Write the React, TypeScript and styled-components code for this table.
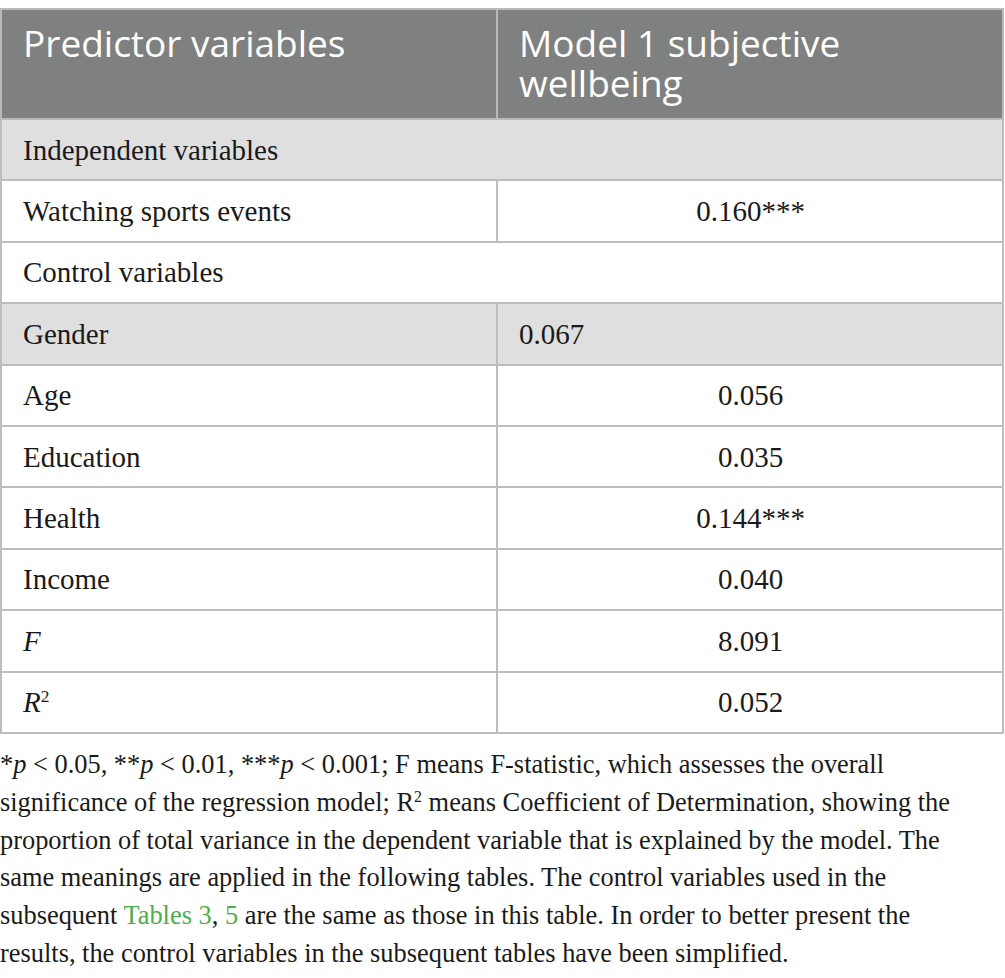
import React from "react";
import styled, { createGlobalStyle } from "styled-components";

const Global = createGlobalStyle`
  html, body { margin: 0; padding: 0; background: #ffffff; }
`;

const Page = styled.div`
  padding-top: 8px;
  width: 1004px;
`;

const Table = styled.table`
  width: 1004px;
  border-collapse: collapse;
  table-layout: fixed;
  font-family: "Liberation Serif", "Times New Roman", serif;
  color: #1a1a1a;
`;

const HeadCell = styled.th`
  background: #7f8080;
  color: #ffffff;
  font-family: "Open Sans", "Noto Sans", sans-serif;
  font-weight: 400;
  font-size: 37px;
  line-height: 40px;
  text-align: left;
  vertical-align: top;
  padding: 13px 20px 0 21px;
  height: 95px;
  border: 2px solid #b9b9b9;
`;

const Row = styled.tr<{ $shaded?: boolean }>`
  height: 61.4px;
  background: ${(p) => (p.$shaded ? "#e0dfe0" : "#ffffff")};
`;

const Cell = styled.td<{ $align?: "left" | "center" }>`
  font-size: 29px;
  line-height: 30px;
  padding: 0 20px 0 21px;
  text-align: ${(p) => p.$align ?? "left"};
  border: 2px solid #bdbdbd;
  vertical-align: middle;
`;

const Note = styled.p`
  margin: 12px 0 0 0;
  font-family: "Liberation Serif", "Times New Roman", serif;
  font-size: 26.4px;
  line-height: 37.8px;
  color: #1a1a1a;
  white-space: nowrap;
`;

const Link = styled.a`
  color: #4cae4c;
  text-decoration: none;
`;

const Sup = styled.sup`
  font-size: 0.6em;
  line-height: 0;
  vertical-align: 0.6em;
`;

const rows: { label: React.ReactNode; value?: string; shaded?: boolean; span?: boolean; left?: boolean }[] = [
  { label: "Independent variables", shaded: true, span: true },
  { label: "Watching sports events", value: "0.160***" },
  { label: "Control variables", span: true },
  { label: "Gender", value: "0.067", shaded: true, left: true },
  { label: "Age", value: "0.056" },
  { label: "Education", value: "0.035" },
  { label: "Health", value: "0.144***" },
  { label: "Income", value: "0.040" },
  { label: <i>F</i>, value: "8.091" },
  { label: <><i>R</i><Sup>2</Sup></>, value: "0.052" },
];

export default function App() {
  return (
    <Page>
      <Global />
      <Table>
        <colgroup>
          <col style={{ width: "496px" }} />
          <col />
        </colgroup>
        <thead>
          <tr>
            <HeadCell>Predictor variables</HeadCell>
            <HeadCell>Model 1 subjective wellbeing</HeadCell>
          </tr>
        </thead>
        <tbody>
          {rows.map((r, i) => (
            <Row key={i} $shaded={r.shaded}>
              {r.span ? (
                <Cell colSpan={2}>{r.label}</Cell>
              ) : (
                <>
                  <Cell>{r.label}</Cell>
                  <Cell $align={r.left ? "left" : "center"}>{r.value}</Cell>
                </>
              )}
            </Row>
          ))}
        </tbody>
      </Table>
      <Note>
        *<i>p</i> &lt; 0.05, **<i>p</i> &lt; 0.01, ***<i>p</i> &lt; 0.001; F means F-statistic, which assesses the overall
        <br />
        significance of the regression model; R<Sup>2</Sup> means Coefficient of Determination, showing the
        <br />
        proportion of total variance in the dependent variable that is explained by the model. The
        <br />
        same meanings are applied in the following tables. The control variables used in the
        <br />
        subsequent <Link href="#">Tables 3</Link>, <Link href="#">5</Link> are the same as those in this table. In order to better present the
        <br />
        results, the control variables in the subsequent tables have been simplified.
      </Note>
    </Page>
  );
}
